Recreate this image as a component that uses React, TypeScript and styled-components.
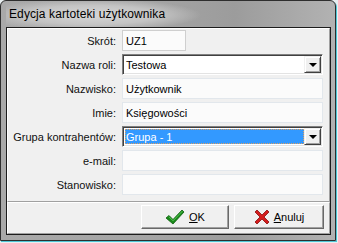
import React from "react";
import styled, { createGlobalStyle } from "styled-components";

const GlobalStyle = createGlobalStyle`
  html, body {
    margin: 0;
    padding: 0;
    background: #e8eef0;
  }
  body {
    width: 338px;
    height: 243px;
    overflow: hidden;
    font-family: "Liberation Sans", Arial, sans-serif;
  }
`;

const Window = styled.div`
  box-sizing: border-box;
  width: 336px;
  height: 241px;
  border: 1px solid #2e2e2e;
  border-radius: 6px 6px 0 0;
  background: linear-gradient(90deg, #a9a9a9 0%, #a4a4a4 45%, #9c9c9c 70%, #b2b2b2 100%);
  box-shadow: 1px 1px 0 #4fc6d6;
  display: flex;
  flex-direction: column;
  padding: 0 4px 5px 5px;
`;

const TitleBar = styled.div`
  height: 26px;
  display: flex;
  align-items: center;
  padding-left: 3px;
  background: radial-gradient(ellipse 110px 16px at 85px 14px, #d6d6d6 0%, #c4c4c4 60%, rgba(196, 196, 196, 0) 100%);
`;

const Title = styled.span`
  font-size: 12px;
  color: #000;
  letter-spacing: 0.1px;
`;

const Client = styled.div`
  flex: 1;
  display: flex;
  flex-direction: column;
  border: 1px solid #1c1c1c;
  background: #f0f0f0;
`;

const Panel = styled.div<{ $grow?: boolean }>`
  box-sizing: border-box;
  border-top: 1px solid #ffffff;
  border-left: 1px solid #ffffff;
  border-right: 1px solid #a0a0a0;
  border-bottom: 1px solid #a0a0a0;
  ${(p) => (p.$grow ? "flex: 1;" : "")}
`;

const Form = styled.div`
  display: grid;
  grid-template-columns: 108px 1fr;
  column-gap: 6px;
  row-gap: 3px;
  padding: 1px 6px 2px 0;
  align-items: center;
`;

const Label = styled.label`
  font-size: 11px;
  color: #111;
  text-align: right;
`;

const TextBox = styled.div<{ $width?: number; $framed?: boolean }>`
  box-sizing: border-box;
  height: 21px;
  width: ${(p) => (p.$width ? `${p.$width}px` : "100%")};
  background: #fbfbfb;
  border: 1px solid ${(p) => (p.$framed ? "#cfcfcf" : "#e2e7ec")};
  font-size: 11px;
  color: #000;
  display: flex;
  align-items: center;
  padding-left: 3px;
`;

const Combo = styled.div`
  box-sizing: border-box;
  height: 21px;
  display: flex;
  background: #fff;
  border-top: 1px solid #808080;
  border-left: 1px solid #808080;
  border-right: 1px solid #ffffff;
  border-bottom: 1px solid #ffffff;
  box-shadow: inset 1px 1px 0 #404040, inset -1px -1px 0 #e3e3e3;
  padding: 2px;
`;

const ComboText = styled.div<{ $selected?: boolean }>`
  flex: 1;
  font-size: 11px;
  display: flex;
  align-items: center;
  padding-left: 1px;
  color: ${(p) => (p.$selected ? "#fff" : "#000")};
  background: ${(p) => (p.$selected ? "#3399ff" : "transparent")};
  outline: ${(p) => (p.$selected ? "1px dotted #e0a060" : "none")};
  outline-offset: -1px;
`;

const DropButton = styled.div`
  box-sizing: border-box;
  width: 17px;
  margin: -1px -1px -1px 0;
  background: #f0f0f0;
  border-top: 1px solid #f0f0f0;
  border-left: 1px solid #f0f0f0;
  border-right: 1px solid #404040;
  border-bottom: 1px solid #404040;
  box-shadow: inset 1px 1px 0 #fff, inset -1px -1px 0 #a0a0a0;
  display: flex;
  align-items: center;
  justify-content: center;
`;

const Arrow = styled.div`
  width: 0;
  height: 0;
  border-left: 4px solid transparent;
  border-right: 4px solid transparent;
  border-top: 4px solid #000;
  margin-top: 1px;
`;

const ButtonRow = styled.div`
  display: flex;
  justify-content: flex-end;
  gap: 5px;
  padding: 2px 5px 4px 0;
`;

const Button = styled.button<{ $width: number }>`
  box-sizing: border-box;
  width: ${(p) => p.$width}px;
  height: 24px;
  background: #f0f0f0;
  border-top: 1px solid #fff;
  border-left: 1px solid #fff;
  border-right: 1px solid #696969;
  border-bottom: 1px solid #696969;
  box-shadow: inset -1px -1px 0 #a0a0a0;
  font-family: "Liberation Sans", Arial, sans-serif;
  font-size: 11px;
  color: #000;
  display: flex;
  align-items: center;
  justify-content: center;
  gap: 4px;
  padding: 0;
`;

const Hotkey = styled.span`
  text-decoration: underline;
`;

function CheckIcon() {
  return (
    <svg width="20" height="16" viewBox="0 0 20 16">
      <path d="M1 9 L4 6.5 L8 10.5 L17 1 L19 3 L8 15 Z" fill="#1a8a1a" stroke="#0d5e0d" strokeWidth="0.8" strokeLinejoin="round" />
      <path d="M4 7.8 L8 11.8 L17.5 2" fill="none" stroke="#55c455" strokeWidth="1" />
    </svg>
  );
}

function CrossIcon() {
  return (
    <svg width="16" height="16" viewBox="0 0 16 16">
      <path d="M1 3 L3 1 L8 6 L13 1 L15 3 L10 8 L15 13 L13 15 L8 10 L3 15 L1 13 L6 8 Z" fill="#d41c1c" stroke="#8a0c0c" strokeWidth="0.8" strokeLinejoin="round" />
    </svg>
  );
}

function ComboBox({ value, selected }: { value: string; selected?: boolean }) {
  return (
    <Combo>
      <ComboText $selected={selected}>{value}</ComboText>
      <DropButton>
        <Arrow />
      </DropButton>
    </Combo>
  );
}

export default function App() {
  return (
    <>
      <GlobalStyle />
      <Window>
        <TitleBar>
          <Title>Edycja kartoteki użytkownika</Title>
        </TitleBar>
        <Client>
          <Panel $grow>
            <Form>
              <Label>Skrót:</Label>
              <TextBox $width={64} $framed>UZ1</TextBox>
              <Label>Nazwa roli:</Label>
              <ComboBox value="Testowa" />
              <Label>Nazwisko:</Label>
              <TextBox>Użytkownik</TextBox>
              <Label>Imie:</Label>
              <TextBox>Księgowości</TextBox>
              <Label>Grupa kontrahentów:</Label>
              <ComboBox value="Grupa - 1" selected />
              <Label>e-mail:</Label>
              <TextBox />
              <Label>Stanowisko:</Label>
              <TextBox />
            </Form>
          </Panel>
          <Panel>
            <ButtonRow>
              <Button $width={88}>
                <CheckIcon />
                <span>
                  <Hotkey>O</Hotkey>K
                </span>
              </Button>
              <Button $width={90}>
                <CrossIcon />
                <span>
                  <Hotkey>A</Hotkey>nuluj
                </span>
              </Button>
            </ButtonRow>
          </Panel>
        </Client>
      </Window>
    </>
  );
}
